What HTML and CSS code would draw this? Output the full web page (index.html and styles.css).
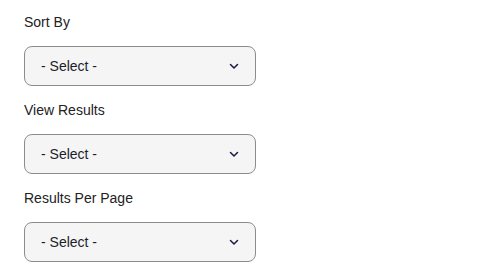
FILE: index.html
```html
<!DOCTYPE html>
<html lang="en">
<head>
  <meta charset="UTF-8" />
  <title>Filters</title>
  <link rel="stylesheet" href="styles.css">
</head>
<body>
  <div class="filters">
    <div class="form-group">
      <label for="sortBy">Sort By</label>
      <div class="select-wrap">
        <select id="sortBy">
          <option value="">- Select -</option>
          <option value="date">Date</option>
          <option value="name">Name</option>
        </select>
        <svg class="chevron" width="10" height="6" viewBox="0 0 10 6"><path d="M1.5 1.5l3.5 3.5 3.5-3.5" fill="none" stroke="#1c1c3a" stroke-width="1.5" stroke-linecap="round" stroke-linejoin="round"/></svg>
      </div>
    </div>
    <div class="form-group">
      <label for="viewResults">View Results</label>
      <div class="select-wrap">
        <select id="viewResults">
          <option value="">- Select -</option>
          <option value="list">List</option>
          <option value="grid">Grid</option>
        </select>
        <svg class="chevron" width="10" height="6" viewBox="0 0 10 6"><path d="M1.5 1.5l3.5 3.5 3.5-3.5" fill="none" stroke="#1c1c3a" stroke-width="1.5" stroke-linecap="round" stroke-linejoin="round"/></svg>
      </div>
    </div>
    <div class="form-group">
      <label for="perPage">Results Per Page</label>
      <div class="select-wrap">
        <select id="perPage">
          <option value="">- Select -</option>
          <option value="10">10</option>
          <option value="25">25</option>
          <option value="50">50</option>
        </select>
        <svg class="chevron" width="10" height="6" viewBox="0 0 10 6"><path d="M1.5 1.5l3.5 3.5 3.5-3.5" fill="none" stroke="#1c1c3a" stroke-width="1.5" stroke-linecap="round" stroke-linejoin="round"/></svg>
      </div>
    </div>
  </div>
</body>
</html>
```

FILE: styles.css
```css
* {
    margin: 0;
    padding: 0;
    box-sizing: border-box;
    font-family: 'Liberation Sans', Arial, sans-serif;
}
body {
    background: #fff;
}
.filters {
    display: flex;
    flex-direction: column;
    gap: 14px;
    padding: 12px 24px;
    width: 280px;
}
.form-group label {
    display: block;
    font-size: 14px;
    line-height: 20px;
    color: #222;
    margin-bottom: 14px;
}
.select-wrap {
    position: relative;
    width: 232px;
}
.select-wrap select {
    appearance: none;
    -webkit-appearance: none;
    width: 100%;
    height: 40px;
    padding: 0 16px;
    border: 1px solid #8c8c8c;
    border-radius: 8px;
    background: #f5f5f5;
    font-size: 14px;
    color: #1e1e2a;
    outline: none;
}
.chevron {
    position: absolute;
    right: 17px;
    top: 17px;
    pointer-events: none;
}
```
